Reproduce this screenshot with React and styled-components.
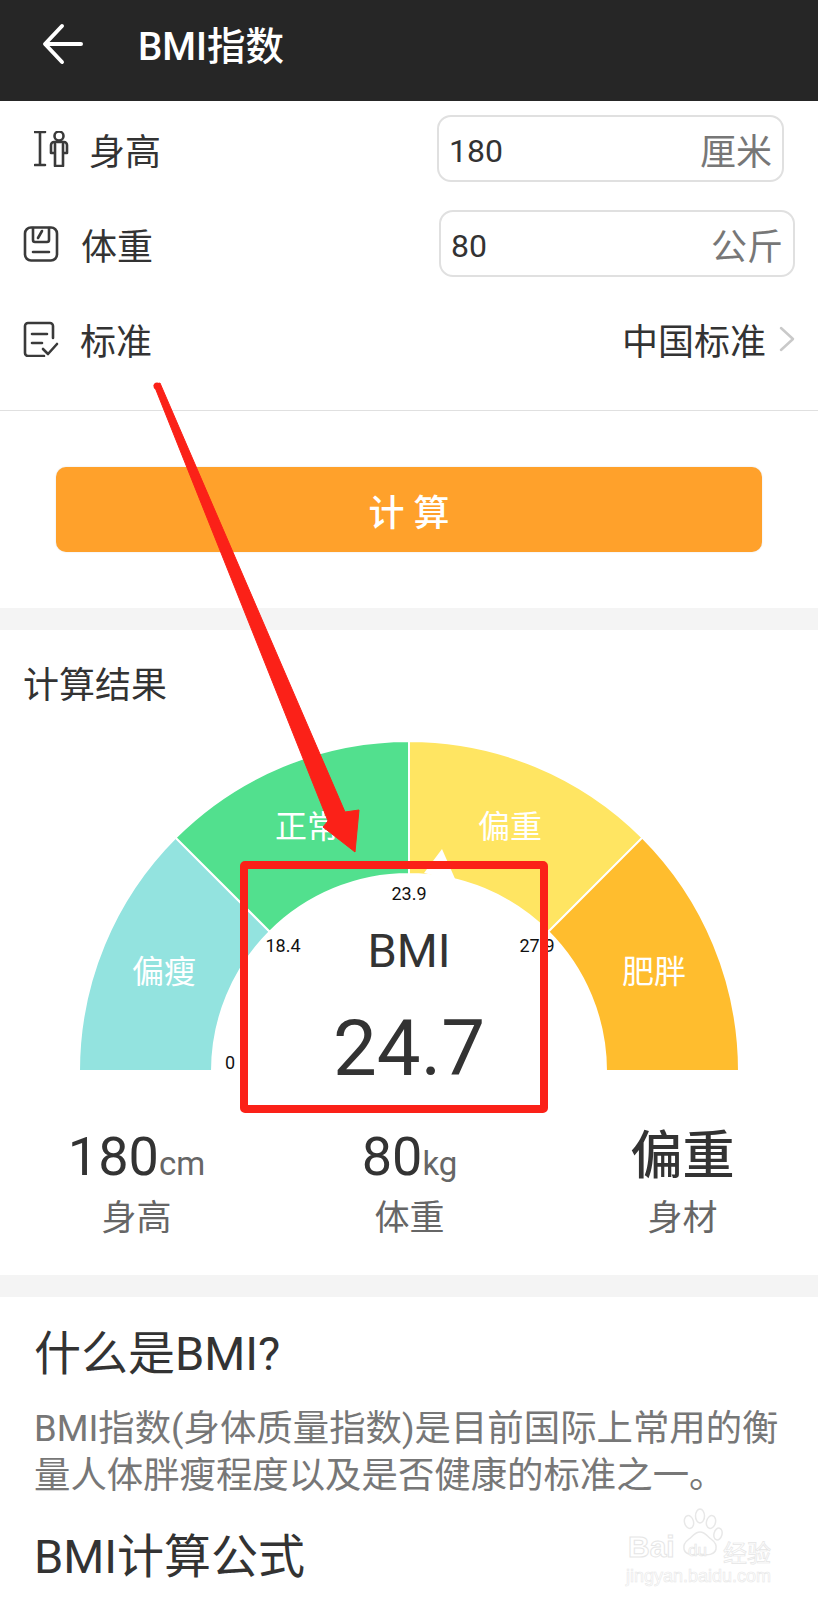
import React from "react";
import styled, { createGlobalStyle } from "styled-components";

const FONT = `Roboto, "Noto Sans CJK SC", sans-serif`;

const GlobalStyle = createGlobalStyle`
  html, body {
    margin: 0;
    padding: 0;
    background: #fff;
  }
  * {
    box-sizing: border-box;
  }
`;

const CX = 409;
const CY = 341;
const OUTER = 330;
const INNER = 197;

const polar = (r, deg) => {
  const a = (deg * Math.PI) / 180;
  return [CX + r * Math.cos(a), CY - r * Math.sin(a)];
};

// one ring segment of the gauge, angles in degrees from the right
const ringPath = (from, to) => {
  const [x1, y1] = polar(OUTER, from);
  const [x2, y2] = polar(OUTER, to);
  const [x3, y3] = polar(INNER, to);
  const [x4, y4] = polar(INNER, from);
  return `M${x1} ${y1}A${OUTER} ${OUTER} 0 0 1 ${x2} ${y2}L${x3} ${y3}A${INNER} ${INNER} 0 0 0 ${x4} ${y4}Z`;
};

const SEGMENTS = [
  { from: 180, to: 135, color: "#93E3DF", label: "偏瘦", x: 164, y: 242 },
  { from: 135, to: 90, color: "#52E08E", label: "正常", x: 307, y: 97 },
  { from: 90, to: 45, color: "#FFE562", label: "偏重", x: 510, y: 97 },
  { from: 45, to: 0, color: "#FFBD2E", label: "肥胖", x: 654, y: 242 },
];

const TICKS = [
  { text: "0", x: 230, y: 332 },
  { text: "18.4", x: 283, y: 215 },
  { text: "23.9", x: 409, y: 163 },
  { text: "27.9", x: 537, y: 215 },
];

const STATS = [
  { value: "180", unit: "cm", label: "身高" },
  { value: "80", unit: "kg", label: "体重" },
  { value: "偏重", label: "身材" },
];

const HeightIcon = () => (
  <RowIcon width="36" height="36" viewBox="0 0 36 36">
    <path d="M1 1h10M6 1v33M1 34h10" />
    <circle cx="25" cy="5" r="4.5" />
    <path d="M17 14a3 3 0 0 1 3-3h10a3 3 0 0 1 3 3v8M17 14v8M21 13v22h8V13M17 22h4M29 22h4" />
  </RowIcon>
);

const ScaleIcon = () => (
  <RowIcon width="36" height="36" viewBox="0 0 36 36">
    <path d="M8 1.5h20a6 6 0 0 1 6 6v21a6 6 0 0 1-6 6H8a6 6 0 0 1-6-6v-21a6 6 0 0 1 6-6Z" />
    <path d="M10 2v12a2 2 0 0 0 2 2h12a2 2 0 0 0 2-2V2M15 12l4-7M10 26h16" />
  </RowIcon>
);

const NoteIcon = () => (
  <RowIcon width="36" height="36" viewBox="0 0 36 36">
    <path d="M30 17V5a3 3 0 0 0-3-3H5a3 3 0 0 0-3 3v27a3 3 0 0 0 3 3h16" />
    <path d="M9 13h15M9 22h10M20 28l5 5 9-10" />
  </RowIcon>
);

const App = () => {
  return (
    <Page>
      <GlobalStyle />

      <Header>
        <svg width="42" height="44" viewBox="0 0 42 44" fill="none" stroke="#fff" strokeWidth="4" strokeLinecap="round" strokeLinejoin="round">
          <path d="M39 22H4M20 4 3 22l17 18" />
        </svg>
        <Title>BMI指数</Title>
      </Header>

      <Form>
        <Row $left={34} $right={34}>
          <HeightIcon />
          <RowLabel $gap={19}>身高</RowLabel>
          <Field $width={347}>
            <FieldValue>180</FieldValue>
            <FieldUnit>厘米</FieldUnit>
          </Field>
        </Row>
        <Row $left={23} $right={23}>
          <ScaleIcon />
          <RowLabel $gap={22}>体重</RowLabel>
          <Field $width={356}>
            <FieldValue>80</FieldValue>
            <FieldUnit>公斤</FieldUnit>
          </Field>
        </Row>
        <Row $left={23} $right={23}>
          <NoteIcon />
          <RowLabel $gap={21}>标准</RowLabel>
          <Picker>
            中国标准
            <svg width="16" height="26" viewBox="0 0 16 26" fill="none" stroke="#c9c9c9" strokeWidth="2.5" strokeLinecap="round" strokeLinejoin="round">
              <path d="M2 2l12 11L2 24" />
            </svg>
          </Picker>
        </Row>
      </Form>

      <ButtonWrap>
        <CalcButton>计 算</CalcButton>
      </ButtonWrap>

      <Band />

      <Result>
        <SectionTitle>计算结果</SectionTitle>
        <Gauge width="818" height="372" viewBox="0 0 818 372">
          {SEGMENTS.map((s) => (
            <path key={s.label} d={ringPath(s.from, s.to)} fill={s.color} stroke="#fff" strokeWidth="2" />
          ))}
          {/* pointer sitting on the inner edge of the ring */}
          <path d="M442 119 424 143 456 151Z" fill="#fff" />
          {SEGMENTS.map((s) => (
            <GaugeLabel key={s.label} x={s.x} y={s.y}>
              {s.label}
            </GaugeLabel>
          ))}
          {TICKS.map((t) => (
            <TickLabel key={t.text} x={t.x} y={t.y}>
              {t.text}
            </TickLabel>
          ))}
          <GaugeName x={CX} y={237}>BMI</GaugeName>
          <GaugeValue x={CX} y={345}>24.7</GaugeValue>
        </Gauge>
        <Stats>
          {STATS.map((s) => (
            <Stat key={s.label}>
              <StatValue $cjk={!s.unit}>
                {s.value}
                {s.unit && <StatUnit>{s.unit}</StatUnit>}
              </StatValue>
              <StatLabel>{s.label}</StatLabel>
            </Stat>
          ))}
        </Stats>
      </Result>

      <Band />

      <Info>
        <InfoHeading>什么是BMI?</InfoHeading>
        <InfoText>BMI指数(身体质量指数)是目前国际上常用的衡量人体胖瘦程度以及是否健康的标准之一。</InfoText>
        <InfoHeading $next>BMI计算公式</InfoHeading>
      </Info>

      <CalloutBox />
      <CalloutArrow width="220" height="480" viewBox="0 0 220 480">
        <path d="M4 5 10 3 195 432 209 430 205 472 173 447 178 441Z" fill="#FB2118" stroke="#FB2118" strokeWidth="1" strokeLinejoin="round" />
        <circle cx="7" cy="6" r="3.5" fill="#FB2118" />
      </CalloutArrow>

      <Watermark>
        <svg width="46" height="52" viewBox="0 0 46 52" fill="none" stroke="#e8e8e8" strokeWidth="1.5">
          <ellipse cx="12" cy="14" rx="4.5" ry="6.5" transform="rotate(-15 12 14)" />
          <ellipse cx="23" cy="8" rx="4.5" ry="7" />
          <ellipse cx="34" cy="14" rx="4.5" ry="6.5" transform="rotate(15 34 14)" />
          <ellipse cx="41" cy="26" rx="4" ry="6" transform="rotate(15 41 26)" />
          <path d="M23 24c-5 0-7 4-11 7-4 3-6 6-5 10 1 5 7 7 16 5 9 2 15 0 16-5 1-4-1-7-5-10-4-3-6-7-11-7Z" />
        </svg>
        <WatermarkBrand>Bai</WatermarkBrand>
        <WatermarkDu>du</WatermarkDu>
        <WatermarkProduct>经验</WatermarkProduct>
        <WatermarkUrl>jingyan.baidu.com</WatermarkUrl>
      </Watermark>
    </Page>
  );
};

const Page = styled.div`
  position: relative;
  width: 818px;
  height: 1600px;
  overflow: hidden;
  background: #fff;
  font-family: ${FONT};
  color: #333;
`;

const Header = styled.header`
  display: flex;
  align-items: flex-start;
  gap: 54px;
  height: 101px;
  padding: 22px 0 0 42px;
  background: #262626;
`;

const Title = styled.h1`
  margin: 2px 0 0;
  font-size: 38.5px;
  line-height: 46px;
  font-weight: 500;
  color: #fff;
`;

const Form = styled.section`
  display: flex;
  flex-direction: column;
  gap: 28px;
  height: 310px;
  padding-top: 14px;
  border-bottom: 1px solid #e0e0e0;
`;

const Row = styled.div`
  display: flex;
  align-items: center;
  height: 67px;
  padding: 0 ${(p) => p.$right}px 0 ${(p) => p.$left}px;
`;

const RowIcon = styled.svg`
  flex: none;
  fill: none;
  stroke: #3a3a3a;
  stroke-width: 2.6;
  stroke-linecap: round;
  stroke-linejoin: round;
`;

const RowLabel = styled.span`
  margin-left: ${(p) => p.$gap}px;
  margin-right: auto;
  font-size: 36px;
  color: #333;
`;

const Field = styled.div`
  display: flex;
  align-items: center;
  justify-content: space-between;
  width: ${(p) => p.$width}px;
  height: 67px;
  padding: 0 10px 0 10px;
  border: 2px solid #e0e0e0;
  border-radius: 14px;
  background: #fff;
`;

const FieldValue = styled.span`
  padding-top: 4px;
  font-size: 32px;
  color: #333;
`;

const FieldUnit = styled.span`
  font-size: 36px;
  color: #777;
`;

const Picker = styled.div`
  display: flex;
  align-items: center;
  gap: 13px;
  font-size: 36px;
  color: #333;
`;

const ButtonWrap = styled.div`
  padding: 56px;
`;

const CalcButton = styled.button`
  display: block;
  width: 706px;
  height: 85px;
  border: none;
  border-radius: 10px;
  background: #ffa12b;
  box-shadow: 0 0 2px rgba(0, 0, 0, 0.12);
  font-family: ${FONT};
  font-size: 36px;
  font-weight: 500;
  color: #fff;
`;

const Band = styled.div`
  height: 22px;
  background: #f4f4f4;
`;

const Result = styled.section`
  height: 645px;
`;

const SectionTitle = styled.h2`
  margin: 0;
  padding: 36px 0 0 23px;
  font-size: 36px;
  line-height: 40px;
  font-weight: 400;
  color: #333;
`;

const Gauge = styled.svg`
  display: block;
  margin-top: 24px;
`;

const GaugeLabel = styled.text`
  font-size: 32px;
  fill: #fff;
  text-anchor: middle;
  dominant-baseline: central;
`;

const TickLabel = styled.text`
  font-size: 18px;
  fill: #111;
  text-anchor: middle;
  dominant-baseline: central;
`;

const GaugeName = styled.text`
  font-size: 47px;
  fill: #333;
  text-anchor: middle;
`;

const GaugeValue = styled.text`
  font-size: 78px;
  fill: #333;
  text-anchor: middle;
`;

const Stats = styled.div`
  display: grid;
  grid-template-columns: repeat(3, 273px);
  margin-top: 20px;
`;

const Stat = styled.div`
  display: flex;
  flex-direction: column;
  align-items: center;
  gap: 2px;
`;

const StatValue = styled.div`
  height: 70px;
  font-size: ${(p) => (p.$cjk ? 52 : 54)}px;
  line-height: 70px;
  font-weight: ${(p) => (p.$cjk ? 500 : 400)};
  color: #333;
`;

const StatUnit = styled.span`
  font-size: 33px;
  color: #666;
`;

const StatLabel = styled.div`
  font-size: 35px;
  line-height: 50px;
  color: #666;
`;

const Info = styled.section`
  padding: 31px 35px 0 34px;
`;

const InfoHeading = styled.h3`
  margin: ${(p) => (p.$next ? "32px" : "0")} 0 0;
  font-size: 47px;
  line-height: 52px;
  font-weight: 400;
  color: #333;
`;

const InfoText = styled.p`
  margin: 25px 0 0;
  font-size: 36.4px;
  line-height: 47px;
  color: #777;
`;

const CalloutBox = styled.div`
  position: absolute;
  left: 240px;
  top: 861px;
  width: 308px;
  height: 252px;
  border: 8px solid #fb2118;
  border-radius: 5px;
`;

const CalloutArrow = styled.svg`
  position: absolute;
  left: 150px;
  top: 380px;
`;

const Watermark = styled.div`
  position: absolute;
  left: 620px;
  top: 1508px;
  width: 160px;
  height: 84px;

  svg {
    position: absolute;
    left: 57px;
    top: 0;
  }
`;

const outlined = `
  position: absolute;
  color: #fff;
  -webkit-text-stroke: 1px #e6e6e6;
  font-family: "Liberation Sans", sans-serif;
`;

const WatermarkBrand = styled.span`
  ${outlined}
  left: 8px;
  top: 22px;
  font-size: 30px;
  font-weight: 700;
`;

const WatermarkDu = styled.span`
  ${outlined}
  left: 68px;
  top: 33px;
  font-size: 17px;
  -webkit-text-stroke: 0.7px #e6e6e6;
`;

const WatermarkProduct = styled.span`
  ${outlined}
  left: 103px;
  top: 26px;
  font-size: 24px;
  font-family: "Noto Sans CJK SC", sans-serif;
  -webkit-text-stroke: 0.7px #e6e6e6;
`;

const WatermarkUrl = styled.span`
  ${outlined}
  left: 6px;
  top: 58px;
  font-size: 18px;
  -webkit-text-stroke: 0.6px #e8e8e8;
`;

export default App;
